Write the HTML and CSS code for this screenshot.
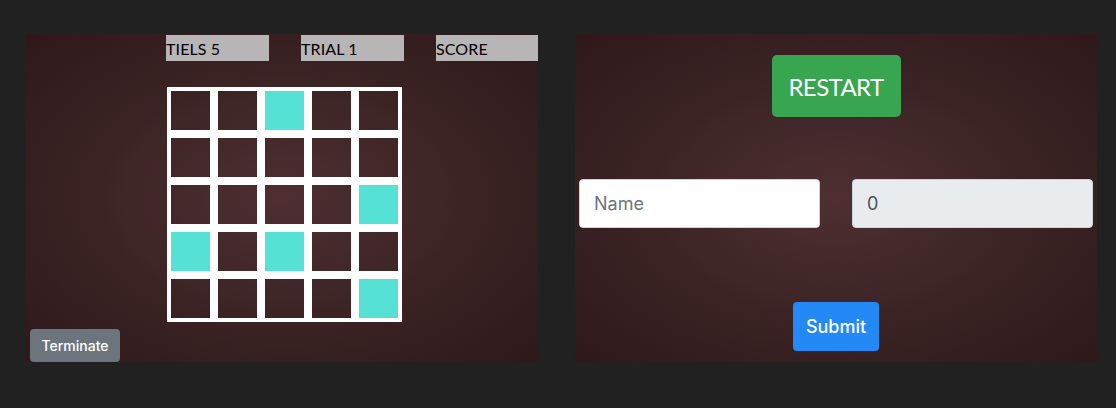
FILE: index.html
```html
<!DOCTYPE html>
<html>
<head>
<meta charset="utf-8">
<link rel="stylesheet" href="styles.css">
</head>
<body>
<div class="page">
  <section class="panel game">
    <div class="stats">
      <div class="stat">TIELS 5</div>
      <div class="stat">TRIAL 1</div>
      <div class="stat">SCORE</div>
    </div>
    <div class="board">
      <div class="tile"></div><div class="tile"></div><div class="tile on"></div><div class="tile"></div><div class="tile"></div>
      <div class="tile"></div><div class="tile"></div><div class="tile"></div><div class="tile"></div><div class="tile"></div>
      <div class="tile"></div><div class="tile"></div><div class="tile"></div><div class="tile"></div><div class="tile on"></div>
      <div class="tile on"></div><div class="tile"></div><div class="tile on"></div><div class="tile"></div><div class="tile"></div>
      <div class="tile"></div><div class="tile"></div><div class="tile"></div><div class="tile"></div><div class="tile on"></div>
    </div>
    <button class="btn terminate">Terminate</button>
  </section>
  <section class="panel result">
    <button class="btn restart">RESTART</button>
    <div class="fields">
      <input class="field" type="text" placeholder="Name">
      <input class="field readonly" type="text" value="0" readonly>
    </div>
    <button class="btn submit">Submit</button>
  </section>
</div>
</body>
</html>
```

FILE: styles.css
```css
html, body {
  margin: 0;
  padding: 0;
  background: #212121;
  height: 100%;
}
.page {
  display: flex;
  gap: 37px;
  padding: 34px 0 0 26px;
}
.panel {
  height: 328px;
  background: radial-gradient(ellipse at center, #4f2f31 0%, #3c2425 50%, #2e1819 100%);
  box-sizing: border-box;
  display: flex;
  flex-direction: column;
}
.game {
  width: 512px;
}
.result {
  width: 522px;
  align-items: center;
}
.stats {
  display: flex;
  gap: 32px;
  margin: 1px 0 0 140px;
}
.stat {
  width: 103px;
  height: 26px;
  line-height: 27px;
  background: #b8b5b6;
  color: #000;
  font-family: Lato, "Liberation Sans", sans-serif;
  font-size: 16px;
  letter-spacing: 0.1px;
}
.stat:last-child {
  width: 102px;
}
.board {
  margin: 26px 0 0 141px;
  display: grid;
  grid-template-columns: repeat(5, 47px);
  grid-auto-rows: 47px;
  width: 235px;
}
.tile {
  border: 4px solid #fff;
}
.tile.on {
  background: #55e1d4;
}
.btn {
  border: none;
  color: #fff;
  font-family: Inter, "Liberation Sans", sans-serif;
  border-radius: 4px;
  padding: 0;
  cursor: pointer;
}
.terminate {
  align-self: flex-start;
  margin: 7px 0 0 4px;
  width: 90px;
  height: 33px;
  background: #6c757d;
  font-size: 14px;
  font-weight: 500;
}
.restart {
  margin-top: 21px;
  width: 129px;
  height: 62px;
  background: #38a550;
  font-family: Lato, "Noto Sans", sans-serif;
  font-size: 24px;
  letter-spacing: -0.6px;
  border-radius: 5px;
}
.fields {
  margin-top: 62px;
  width: 100%;
  box-sizing: border-box;
  padding: 0 4px;
  display: flex;
  justify-content: space-between;
}
.field {
  width: 241px;
  height: 49px;
  box-sizing: border-box;
  border: 1px solid #ced4da;
  border-radius: 4px;
  background: #fff;
  padding: 0 14px;
  font-family: Inter, "Liberation Sans", sans-serif;
  font-size: 18px;
  color: #495057;
  outline: none;
}
.field::placeholder {
  color: #6c757d;
}
.field.readonly {
  background: #e9ecef;
}
.submit {
  margin-top: 74px;
  width: 86px;
  height: 49px;
  background: #2389f7;
  font-size: 18px;
  font-weight: 500;
}
```
